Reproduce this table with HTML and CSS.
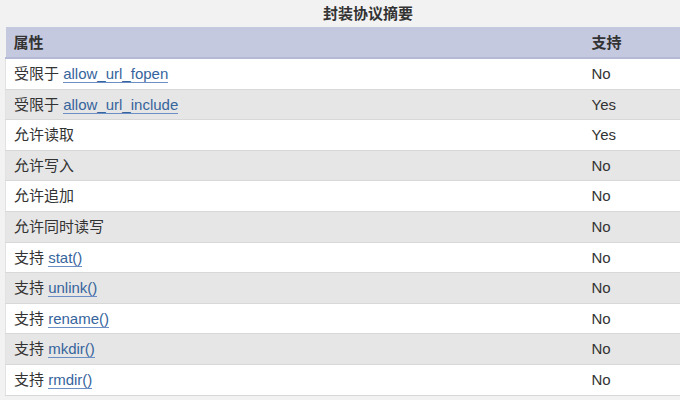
FILE: index.html
```html
<!DOCTYPE html>
<html lang="zh">
<head>
<meta charset="utf-8">
<link rel="stylesheet" href="styles.css">
</head>
<body>
<div class="wrap">
<table class="summary">
  <caption>封装协议摘要</caption>
  <thead>
    <tr><th class="c1">属性</th><th class="c2">支持</th></tr>
  </thead>
  <tbody>
    <tr><td>受限于 <a href="#">allow_url_fopen</a></td><td>No</td></tr>
    <tr><td>受限于 <a href="#">allow_url_include</a></td><td>Yes</td></tr>
    <tr><td>允许读取</td><td>Yes</td></tr>
    <tr><td>允许写入</td><td>No</td></tr>
    <tr><td>允许追加</td><td>No</td></tr>
    <tr><td>允许同时读写</td><td>No</td></tr>
    <tr><td>支持 <a href="#">stat()</a></td><td>No</td></tr>
    <tr><td>支持 <a href="#">unlink()</a></td><td>No</td></tr>
    <tr><td>支持 <a href="#">rename()</a></td><td>No</td></tr>
    <tr><td>支持 <a href="#">mkdir()</a></td><td>No</td></tr>
    <tr><td>支持 <a href="#">rmdir()</a></td><td>No</td></tr>
  </tbody>
</table>
</div>
</body>
</html>
```
FILE: styles.css
```css
html, body {
  margin: 0;
  padding: 0;
  background: #f2f2f2;
  overflow: hidden;
}
body {
  font-family: "Liberation Sans", Arial, "Noto Sans CJK SC", sans-serif;
  font-size: 15px;
  color: #333;
}
.wrap {
  padding-left: 5px;
  width: 675px;
  overflow: hidden;
}
.summary {
  width: 726px;
  border-collapse: collapse;
  table-layout: fixed;
}
.summary caption {
  font-weight: bold;
  font-size: 15px;
  color: #333;
  height: 27px;
  line-height: 27px;
  text-align: center;
}
.summary th {
  background: #c5c9df;
  text-align: left;
  font-weight: bold;
  color: #333;
  padding: 6px 8px 4px;
  line-height: 20px;
  border-bottom: 2px solid #b4b9d6;
}
.summary .c1 { width: 562px; }
.summary td {
  padding: 5px 8px 4px;
  line-height: 20.6px;
  background: #fff;
  border-bottom: 1px solid #d8d8d8;
  white-space: nowrap;
}
.summary td:first-child {
  border-left: 1px solid #e2e2e2;
}
.summary tbody tr:nth-child(even) td {
  background: #e6e6e6;
}
.summary a {
  color: #36649c;
  text-decoration: none;
  border-bottom: 1px solid #6b8fc4;
}
```
